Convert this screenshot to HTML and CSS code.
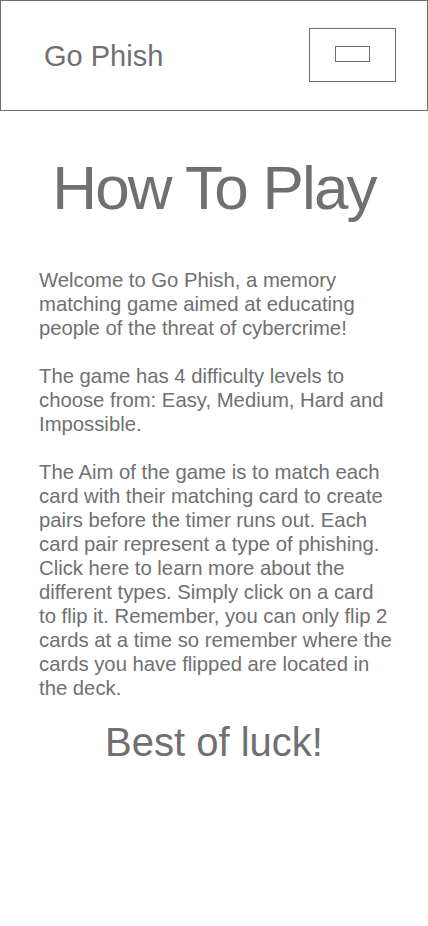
FILE: index.html
```html
<!DOCTYPE html>
<html lang="en">
<head>
<meta charset="utf-8">
<title>Go Phish - How To Play</title>
<link rel="stylesheet" href="styles.css">
</head>
<body>
<header class="topbar">
  <span class="brand">Go Phish</span>
  <button class="menu-btn" type="button" aria-label="Menu"><span class="menu-icon"></span></button>
</header>
<main class="content">
  <h1 class="title">How To Play</h1>
  <div class="text">
    <p>Welcome to Go Phish, a memory matching game aimed at educating people of the threat of cybercrime!</p>
    <p>The game has 4 difficulty levels to choose from: Easy, Medium, Hard and Impossible.</p>
    <p>The Aim of the game is to match each card with their matching card to create pairs before the timer runs out. Each card pair represent a type of phishing. Click here to learn more about the different types. Simply click on a card to flip it. Remember, you can only flip 2 cards at a time so remember where the cards you have flipped are located in the deck.</p>
  </div>
  <p class="luck">Best of luck!</p>
</main>
</body>
</html>
```
FILE: styles.css
```css
* { box-sizing: border-box; }
html, body { margin: 0; padding: 0; background: #ffffff; }
body {
  width: 428px;
  font-family: "Liberation Sans", Arial, sans-serif;
  color: #707070;
}
.topbar {
  height: 111px;
  border: 1px solid #6f6f6f;
  display: flex;
  align-items: center;
  justify-content: space-between;
  padding: 0 31px 0 43px;
}
.brand {
  font-size: 29px;
  line-height: 1;
  margin-top: 1px;
}
.menu-btn {
  width: 87px;
  height: 54px;
  border: 1px solid #6f6f6f;
  background: #fff;
  padding: 0;
  margin: 0 0 2px 0;
  display: flex;
  align-items: center;
  justify-content: center;
}
.menu-icon {
  display: block;
  width: 35px;
  height: 16px;
  border: 1px solid #6f6f6f;
  margin-bottom: 2px;
}
.content {
  padding: 45px 0 0 0;
}
.title {
  margin: 0;
  font-weight: normal;
  font-size: 62px;
  line-height: 64px;
  text-align: center;
  letter-spacing: -1.8px;
}
.text {
  margin-top: 48px;
  padding: 0 35px 0 39px;
  font-size: 20.3px;
  line-height: 24px;
}
.text p { margin: 0 0 24px 0; }
.text p:last-child { margin-bottom: 0; }
.luck {
  margin: 18px 0 0 0;
  text-align: center;
  font-size: 40px;
  line-height: 48px;
}
```
